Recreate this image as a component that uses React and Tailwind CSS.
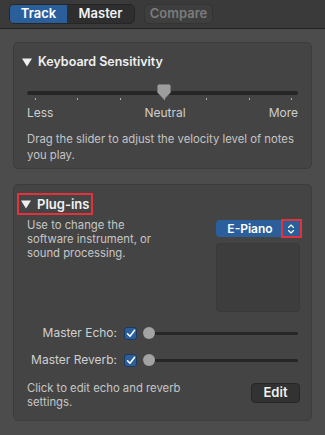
import React from "react";

function Tri() {
  return (
    <svg width="10" height="9" viewBox="0 0 10 9" className="shrink-0">
      <polygon points="0,0.5 10,0.5 5,8.5" fill="#efefef" />
    </svg>
  );
}

function Check() {
  return (
    <div className="w-[13px] h-[13px] rounded-[3px] bg-[#2c5f9a] border border-[#1b3a60] flex items-center justify-center shrink-0">
      <svg width="10" height="9" viewBox="0 0 10 9">
        <path d="M1.5 4.8 L4 7.3 L8.6 1.2" fill="none" stroke="#ffffff" strokeWidth="1.5" strokeLinecap="round" strokeLinejoin="round" />
      </svg>
    </div>
  );
}

function MiniSlider() {
  return (
    <div className="relative flex-1 h-[14px] flex items-center">
      <div className="w-full h-[3px] rounded-full bg-[#262626]" />
      <div className="absolute left-0 top-[1px] w-[12px] h-[12px] rounded-full bg-[#a3a3a3]" />
    </div>
  );
}

export default function App() {
  const ticks = [8, 50, 93, 137, 179, 222, 264];
  return (
    <div className="w-[325px] h-[435px] bg-[#4c4c4c] font-['Inter',sans-serif] text-[#d2d2d2] flex flex-col overflow-hidden">
      <div className="h-[29px] shrink-0 bg-[#3a3a3a] border-b border-[#232323] flex items-center pl-[9px] gap-[9px]">
        <div className="flex h-[20px] rounded-[5px] overflow-hidden border border-[#262626]">
          <div className="w-[57px] bg-[#2b5f9b] text-white text-[13px] font-semibold flex items-center justify-center">Track</div>
          <div className="w-[67px] bg-[#2e2e2e] text-[#f2f2f2] text-[13px] font-semibold flex items-center justify-center">Master</div>
        </div>
        <div className="w-[69px] h-[20px] rounded-[5px] bg-[#3e3e3e] border border-[#343434] text-[#7c7c7c] text-[13px] font-semibold flex items-center justify-center">Compare</div>
      </div>

      <div className="flex flex-col px-[13px] pt-[13px] gap-[15px]">
        <div className="h-[127px] rounded-[5px] bg-[#444444] border border-[#3c3c3c] flex flex-col pt-[11px]">
          <div className="h-[16px] flex items-center gap-[6px] pl-[8px]">
            <Tri />
            <span className="text-[12.5px] font-semibold text-[#f0f0f0] leading-[16px]">Keyboard Sensitivity</span>
          </div>
          <div className="mt-[13px] mx-[13px] relative h-[20px]">
            <div className="absolute left-0 right-0 top-[8px] h-[4px] rounded-full bg-[#262626]" />
            {ticks.map((t) => (
              <div key={t} className="absolute top-[15px] w-[1px] h-[2px] bg-[#b0b0b0]" style={{ left: t }} />
            ))}
            <svg className="absolute top-[1px]" style={{ left: 130 }} width="14" height="16" viewBox="0 0 14 16">
              <path d="M2 0.5 H12 Q13.5 0.5 13.5 2 V8.5 L7 15.5 L0.5 8.5 V2 Q0.5 0.5 2 0.5 Z" fill="#9d9d9d" stroke="#7a7a7a" strokeWidth="0.6" />
            </svg>
          </div>
          <div className="mt-[3px] mx-[13px] h-[14px] flex justify-between text-[12px] leading-[14px] text-[#cfcfcf]">
            <span>Less</span>
            <span className="ml-[8px]">Neutral</span>
            <span>More</span>
          </div>
          <div className="mt-[11px] mx-[13px] text-[11.3px] leading-[16px] text-[#c4c4c4]">
            Drag the slider to adjust the velocity level of notes<br />you play.
          </div>
        </div>

        <div className="h-[237px] rounded-[5px] bg-[#444444] border border-[#3c3c3c] flex flex-col pt-[8px]">
          <div className="ml-[3px] self-start h-[22px] border-2 border-[#e2333d] inline-flex items-center gap-[6px] pl-[2px] pr-[2px]">
            <Tri />
            <span className="text-[13px] font-semibold text-[#f2f2f2] leading-[16px]">Plug-ins</span>
          </div>
          <div className="flex mt-[3px] pl-[13px] pr-[11px]">
            <div className="flex-1 text-[11.3px] leading-[14px] text-[#c6c6c6]">
              Use to change the<br />software instrument, or<br />sound processing.
            </div>
            <div className="w-[84px] flex flex-col">
              <div className="relative mt-[2px] h-[17px] rounded-[4px] bg-[#2b5f9b] flex items-center">
                <span className="flex-1 text-center text-[12px] font-semibold text-white pl-[2px]">E-Piano</span>
                <div className="w-[18px] h-full flex items-center justify-center">
                  <svg width="8" height="12" viewBox="0 0 8 12">
                    <path d="M1.5 4.5 L4 2 L6.5 4.5 M1.5 7.5 L4 10 L6.5 7.5" fill="none" stroke="#ffffff" strokeWidth="1.1" strokeLinecap="round" strokeLinejoin="round" />
                  </svg>
                </div>
                <div className="absolute -top-[1px] -right-[2px] w-[21px] h-[19px] border-2 border-[#e2333d]" />
              </div>
              <div className="mt-[6px] h-[69px] rounded-[4px] bg-[#3d3d3d] border border-[#393939]" />
            </div>
          </div>

          <div className="mt-[14px] h-[14px] flex items-center pr-[13px]">
            <span className="w-[103px] text-right text-[12px] text-[#d0d0d0] leading-[14px]">Master Echo:</span>
            <div className="ml-[7px]"><Check /></div>
            <div className="ml-[6px] flex-1 flex"><MiniSlider /></div>
          </div>
          <div className="mt-[13px] h-[14px] flex items-center pr-[13px]">
            <span className="w-[103px] text-right text-[12px] text-[#d0d0d0] leading-[14px]">Master Reverb:</span>
            <div className="ml-[7px]"><Check /></div>
            <div className="ml-[6px] flex-1 flex"><MiniSlider /></div>
          </div>

          <div className="mt-[14px] flex items-start pl-[13px] pr-[11px]">
            <div className="flex-1 text-[11.3px] leading-[14px] text-[#c6c6c6]">
              Click to edit echo and reverb<br />settings.
            </div>
            <div className="mt-[2px] w-[49px] h-[20px] rounded-[4px] bg-[#323232] border border-[#262626] text-[13px] font-semibold text-[#f0f0f0] flex items-center justify-center">Edit</div>
          </div>
        </div>
      </div>
    </div>
  );
}
